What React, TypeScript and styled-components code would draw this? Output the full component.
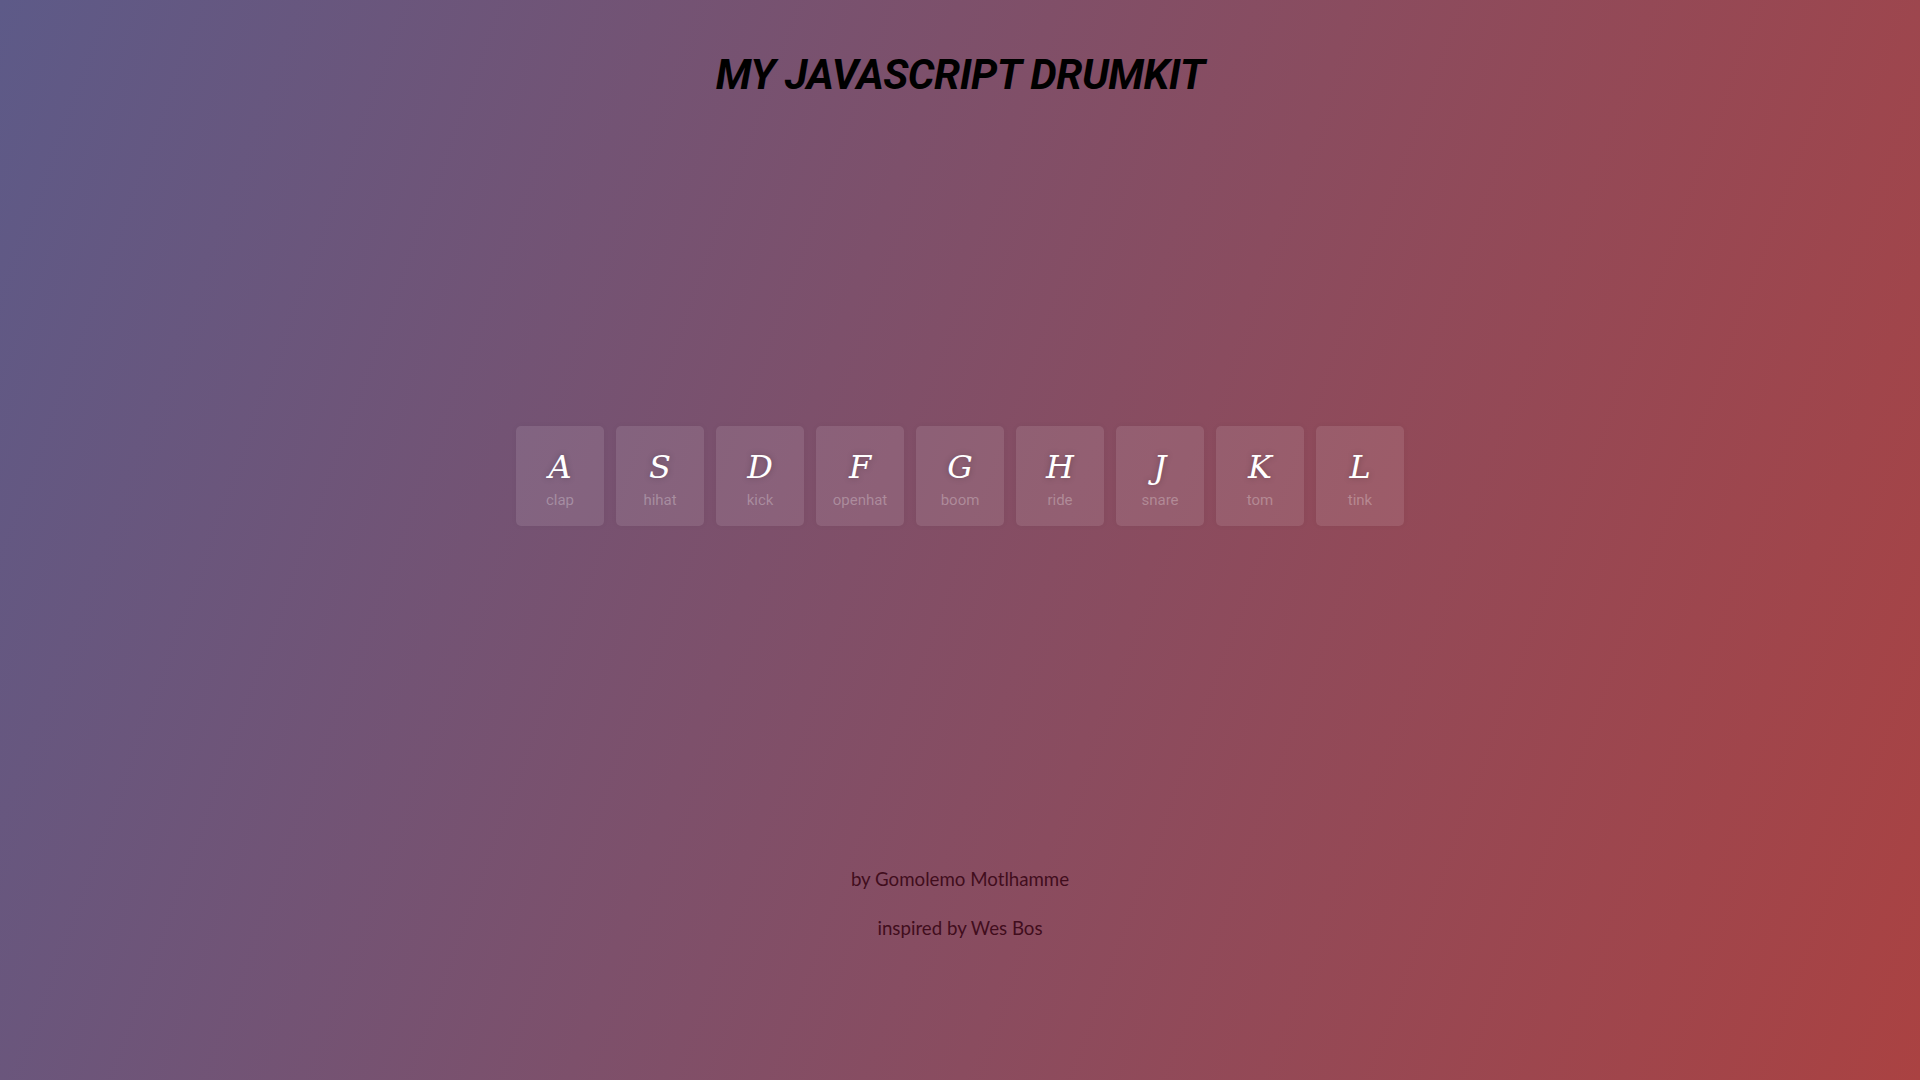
import React from "react";
import styled, { createGlobalStyle } from "styled-components";

const GlobalStyle = createGlobalStyle`
  html, body {
    margin: 0;
    padding: 0;
  }
  body {
    min-height: 100vh;
    background: linear-gradient(110deg, #5d5a88 0%, #aa4242 100%);
    font-family: Roboto, "Liberation Sans", sans-serif;
  }
`;

const Page = styled.div`
  height: 100vh;
  display: flex;
  flex-direction: column;
  align-items: center;
  overflow: hidden;
`;

const Title = styled.h1`
  margin: 50px 0 0;
  font-family: Roboto, "Liberation Sans", sans-serif;
  font-style: italic;
  font-weight: 700;
  font-size: 42px;
  letter-spacing: -0.5px;
  color: #000;
  line-height: 1.2;
`;

const Keys = styled.div`
  margin-top: 326px;
  display: flex;
  gap: 12px;
`;

const Key = styled.div`
  width: 88px;
  height: 100px;
  box-sizing: border-box;
  border-radius: 5px;
  background: rgba(255, 255, 255, 0.1);
  box-shadow: 0 0 6px rgba(0, 0, 0, 0.04);
  display: flex;
  flex-direction: column;
  align-items: center;
  justify-content: center;
  padding-top: 4px;
`;

const Letter = styled.kbd`
  display: block;
  font-family: "DejaVu Serif", "Liberation Serif", serif;
  font-style: italic;
  font-size: 32px;
  line-height: 40px;
  color: #fff;
  text-shadow: 0 0 6px rgba(0, 0, 0, 0.25);
`;

const Sound = styled.span`
  display: block;
  margin-top: 4px;
  font-family: Roboto, "Liberation Sans", sans-serif;
  font-size: 15px;
  line-height: 18px;
  color: rgba(255, 255, 255, 0.28);
`;

const Footer = styled.footer`
  margin-top: 342px;
  display: flex;
  flex-direction: column;
  align-items: center;
  gap: 27px;
  font-family: Lato, "Open Sans", sans-serif;
  font-size: 18.7px;
  line-height: 22px;
  color: #410d1d;
`;

const FooterLine = styled.p`
  margin: 0;
`;

const keys = [
  ["A", "clap"],
  ["S", "hihat"],
  ["D", "kick"],
  ["F", "openhat"],
  ["G", "boom"],
  ["H", "ride"],
  ["J", "snare"],
  ["K", "tom"],
  ["L", "tink"],
];

export default function App() {
  return (
    <>
      <GlobalStyle />
      <Page>
        <Title>MY JAVASCRIPT DRUMKIT</Title>
        <Keys>
          {keys.map(([k, s]) => (
            <Key key={k}>
              <Letter>{k}</Letter>
              <Sound>{s}</Sound>
            </Key>
          ))}
        </Keys>
        <Footer>
          <FooterLine>by Gomolemo Motlhamme</FooterLine>
          <FooterLine>inspired by Wes Bos</FooterLine>
        </Footer>
      </Page>
    </>
  );
}
